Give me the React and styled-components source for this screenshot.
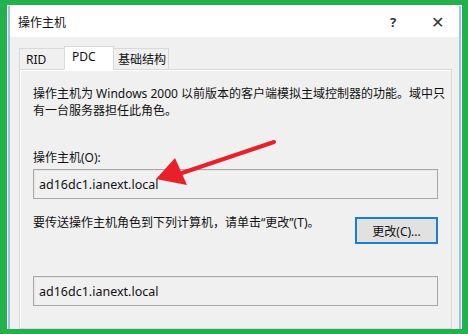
import React from 'react'
import styled, { createGlobalStyle } from 'styled-components'

const Global = createGlobalStyle`
  html, body { margin: 0; padding: 0; background: #22b14c; }
  * { box-sizing: border-box; }
`

const Frame = styled.div`
  width: 468px;
  height: 334px;
  background: #22b14c;
  padding: 5px 6px 5px 7px;
  overflow: hidden;
  font-family: "Noto Sans", "Noto Sans CJK SC", sans-serif;
  font-size: 12px;
  color: #111;
`

const Window = styled.div`
  height: 100%;
  background: #f0f0f0;
  border: 1px solid #fff;
  border-bottom: none;
  box-shadow: inset 2px 0 0 #9cc3e0, inset -2px 0 0 #9cc3e0;
  display: flex;
  flex-direction: column;
  overflow: hidden;
`

const TitleBar = styled.div`
  height: 31px;
  background: #fff;
  margin: 0 2px;
  display: flex;
  align-items: center;
  padding: 0 0 0 8px;
  flex-shrink: 0;
`

const Title = styled.span`
  flex: 1;
  font-size: 12px;
  color: #111;
`

const TitleBtn = styled.span`
  width: 44px;
  text-align: center;
  font-size: ${p => p.$size || 13}px;
  font-weight: ${p => p.$weight || 400};
  color: #333;
`

const Body = styled.div`
  flex: 1;
  padding: 9px 7px 0 9px;
  display: flex;
  flex-direction: column;
  margin: 0 2px;
`

const Tabs = styled.div`
  display: flex;
  align-items: flex-end;
  height: 24px;
  position: relative;
  z-index: 1;
  margin-bottom: -1px;
`

const Tab = styled.div`
  width: ${p => p.$w}px;
  height: ${p => (p.$active ? 24 : 22)}px;
  padding-left: ${p => p.$pl}px;
  display: flex;
  align-items: center;
  background: ${p => (p.$active ? '#fff' : '#f0f0f0')};
  border: 1px solid #d9d9d9;
  border-bottom: ${p => (p.$active ? '1px solid #fff' : '1px solid #d9d9d9')};
  margin-left: -1px;
  padding-bottom: ${p => (p.$active ? 4 : 0)}px;
  &:first-child { margin-left: 0; }
`

const Panel = styled.div`
  flex: 1;
  position: relative;
  background: #f0f0f0;
  border: 1px solid #d9d9d9;
  box-shadow: inset 1px 1px 0 #fff;
  padding: 15px 13px 0 13px;
  display: flex;
  flex-direction: column;
`

const Para = styled.p`
  margin: 0;
  line-height: 17px;
  width: 418px;
`

const Label = styled.div`
  margin-top: 30px;
  line-height: 17px;
`

const Field = styled.div`
  margin-top: ${p => p.$mt || 0}px;
  height: 30px;
  width: 405px;
  border: 1px solid #a8a8a8;
  box-shadow: inset 1px 1px 0 #e6e6e6;
  background: #f0f0f0;
  display: flex;
  align-items: center;
  padding-left: 5px;
  font-size: 12.5px;
`

const Row = styled.div`
  display: flex;
  justify-content: space-between;
  align-items: flex-start;
  width: 405px;
  margin-top: 15px;
`

const RowText = styled.div`
  line-height: 17px;
`

const Button = styled.div`
  width: 83px;
  height: 27px;
  margin-top: 3px;
  background: #e1e1e1;
  border: 2px solid #1a7fd4;
  display: flex;
  align-items: center;
  justify-content: center;
  font-size: 12px;
`

const Arrow = styled.svg`
  position: absolute;
  left: 0;
  top: 0;
  pointer-events: none;
`

export default function App() {
  return (
    <Frame>
      <Global />
      <Window>
        <TitleBar>
          <Title>操作主机</Title>
          <TitleBtn $size={13} $weight={700}>?</TitleBtn>
          <TitleBtn $size={16}>✕</TitleBtn>
        </TitleBar>
        <Body>
          <Tabs>
            <Tab $w={46} $pl={6}>RID</Tab>
            <Tab $active $w={50} $pl={7}>PDC</Tab>
            <Tab $w={56} $pl={4}>基础结构</Tab>
          </Tabs>
          <Panel>
            <Para>
              操作主机为 Windows 2000 以前版本的客户端模拟主域控制器的功能。域中只有一台服务器担任此角色。
            </Para>
            <Label>操作主机(O):</Label>
            <Field $mt={3}>ad16dc1.ianext.local</Field>
            <Row>
              <RowText>要传送操作主机角色到下列计算机，请单击“更改”(T)。</RowText>
              <Button>更改(C)...</Button>
            </Row>
            <Field $mt={32}>ad16dc1.ianext.local</Field>
            <Arrow width="433" height="260" viewBox="0 0 433 260">
              <line x1="254" y1="72" x2="162" y2="103" stroke="#e8202a" strokeWidth="4" strokeLinecap="round" />
              <polygon points="136,109 155,88 167,115" fill="#e8202a" />
            </Arrow>
          </Panel>
        </Body>
      </Window>
    </Frame>
  )
}
